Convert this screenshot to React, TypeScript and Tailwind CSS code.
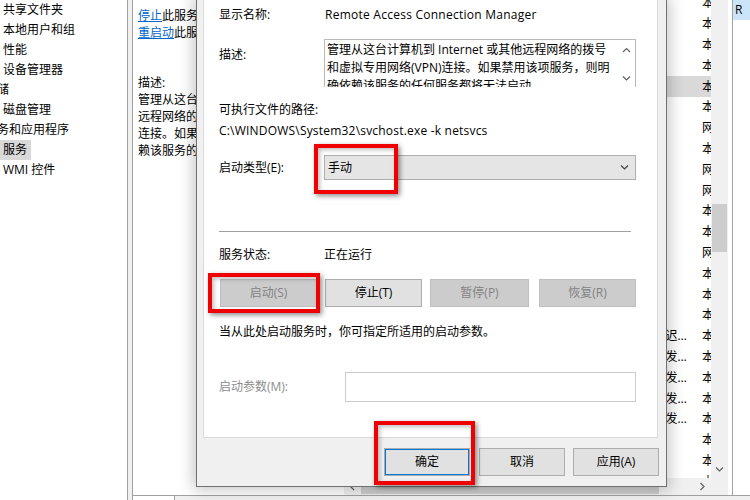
import clsx from 'clsx'
import type { ReactNode } from 'react'

// 服务管理器背景 + “属性”对话框（常规页）

type Dir = 'up' | 'down' | 'left' | 'right'

const Chevron = ({ dir, className }: { dir: Dir; className?: string }) => {
  const vertical = dir === 'up' || dir === 'down'
  const pts = {
    up: '1,5 4.5,1.5 8,5',
    down: '1,1.5 4.5,5 8,1.5',
    left: '5,1 1.5,4.5 5,8',
    right: '1.5,1 5,4.5 1.5,8',
  }[dir]
  return (
    <svg
      width={vertical ? 9 : 7}
      height={vertical ? 7 : 9}
      viewBox={vertical ? '0 0 9 7' : '0 0 7 9'}
      className={className}
    >
      <polyline points={pts} fill="none" stroke="currentColor" strokeWidth="1.2" />
    </svg>
  )
}

const tree = [
  { t: '共享文件夹', child: true },
  { t: '本地用户和组', child: true },
  { t: '性能', child: true },
  { t: '设备管理器', child: true },
  { t: '存储', child: false },
  { t: '磁盘管理', child: true },
  { t: '服务和应用程序', child: false },
  { t: '服务', child: true, sel: true },
  { t: 'WMI 控件', child: true },
]

const Tree = () => (
  <div className="h-full w-[128px] shrink-0 overflow-hidden border-r border-[#a0a0a0] bg-white">
    {tree.map((n) => (
      <div key={n.t} className={clsx('h-[20px] whitespace-nowrap leading-[20px]', !n.child && 'ml-[-18px]')}>
        <span className={clsx('inline-block px-[3px] pr-[4px]', n.sel && 'bg-[#d9d9d9]')}>{n.t}</span>
      </div>
    ))}
  </div>
)

const MiddlePane = () => (
  <div className="h-full w-[211px] shrink-0 overflow-hidden bg-white pl-[5px] pt-[7px] leading-[17px] whitespace-nowrap">
    <div>
      <span className="text-[#0066cc] underline">停止</span>此服务
    </div>
    <div>
      <span className="text-[#0066cc] underline">重启动</span>此服务
    </div>
    <div className="mt-[33px]">描述:</div>
    <div>管理从这台计算机到 Internet 或其他</div>
    <div>远程网络的拨号和虚拟专用网络(VPN)</div>
    <div>连接。如果禁用该项服务，则明确依</div>
    <div>赖该服务的任何服务都将无法启动。</div>
  </div>
)

const logonNet = [6, 8, 9, 12]
const startup: Record<number, string> = {
  16: '自动(延迟启动)',
  17: '手动(触发器启动)',
  18: '手动(触发器启动)',
  19: '手动(触发器启动)',
  20: '手动(触发器启动)',
}

const ServiceList = () => (
  <div className="flex h-full w-[384px] shrink-0 flex-col">
    <div className="flex min-h-0 flex-1">
      <div className="w-[367px] overflow-hidden bg-white">
        <div className="mt-[-7px]">
          {Array.from({ length: 24 }, (_, i) => (
            <div
              key={i}
              className={clsx('flex h-[20.8px] items-center whitespace-nowrap', i === 4 && 'bg-[#d9d9d9]')}
            >
              <div className="w-[282px] shrink-0" />
              <div className="w-[64px] shrink-0 truncate">{startup[i] ?? '手动'}</div>
              <div className="w-[12px] shrink-0" />
              <div className="w-[9px] shrink-0 overflow-hidden">{logonNet.includes(i) ? '网络服务' : '本地系统'}</div>
            </div>
          ))}
        </div>
      </div>
      <div className="relative w-[17px] shrink-0 bg-[#f0f0f0]">
        <div className="absolute left-[1px] top-[204px] h-[48px] w-[15px] bg-[#cdcdcd]" />
        <div className="absolute bottom-0 flex h-[17px] w-full items-center justify-center text-[#606060]">
          <Chevron dir="down" />
        </div>
      </div>
    </div>
    <div className="flex h-[17px] shrink-0 bg-[#f0f0f0]">
      <div className="flex w-[17px] items-center justify-center text-[#606060]">
        <Chevron dir="left" />
      </div>
      <div className="my-[1px] w-[298px] bg-[#cdcdcd]" />
      <div className="flex-1" />
      <div className="flex w-[17px] items-center justify-center text-[#606060]">
        <Chevron dir="right" />
      </div>
      <div className="w-[17px]" />
    </div>
  </div>
)

const WinButton = ({
  children,
  className,
  disabled,
  focused,
}: {
  children: ReactNode
  className: string
  disabled?: boolean
  focused?: boolean
}) => (
  <div
    className={clsx(
      'flex h-[28px] shrink-0 items-center justify-center border',
      disabled ? 'border-[#bfbfbf] bg-[#cccccc] text-[#838383]' : 'border-[#adadad] bg-[#e1e1e1] text-black',
      focused && 'border-[#0078d7] shadow-[inset_0_0_0_1px_#0078d7]',
      className,
    )}
  >
    {children}
  </div>
)

const Dialog = () => (
  <div className="absolute left-[196px] top-0 h-[487px] w-[471px] border-x border-b border-[#707070] bg-[#f0f0f0] shadow-[0_0_14px_3px_rgba(0,0,0,0.22)]">
    <div className="ml-[6px] h-[438px] w-[455px] border-x border-b border-[#d9d9d9] bg-white pl-[15px] pr-[20px] leading-[16px]">
      <div className="flex pt-[7px]">
        <div className="w-[106px] shrink-0">显示名称:</div>
        <div className="tracking-[0.25px]">Remote Access Connection Manager</div>
      </div>

      <div className="mt-[16px] flex">
        <div className="w-[105px] shrink-0 pt-[8px]">描述:</div>
        <div className="flex h-[48px] w-[312px] overflow-hidden border-x border-t border-[#b9b9b9]">
          <div className="flex-1 overflow-hidden whitespace-nowrap pl-[2px] pt-[1px] leading-[18px]">
            <div>管理从这台计算机到 Internet 或其他远程网络的拨号</div>
            <div>和虚拟专用网络(VPN)连接。如果禁用该项服务，则明</div>
            <div className="h-[11px] overflow-hidden">确依赖该服务的任何服务都将无法启动。</div>
          </div>
          <div className="flex w-[17px] shrink-0 flex-col items-center pt-[7px] text-[#606060]">
            <Chevron dir="up" />
            <Chevron dir="down" className="mt-[21px]" />
          </div>
        </div>
      </div>

      <div className="mt-[15px]">可执行文件的路径:</div>
      <div className="mt-[5px] tracking-[0.2px]">C:\WINDOWS\System32\svchost.exe -k netsvcs</div>

      <div className="mt-[16px] flex items-center">
        <div className="w-[105px] shrink-0">启动类型(E):</div>
        <div className="flex h-[25px] w-[312px] items-center justify-between border border-[#adadad] bg-[#e5e5e5] pl-[3px] pr-[6px]">
          <span>手动</span>
          <Chevron dir="down" className="text-[#404040]" />
        </div>
      </div>

      <div className="mt-[51px] h-px w-[412px] bg-[#a0a0a0]" />

      <div className="mt-[15px] flex">
        <div className="w-[105px] shrink-0">服务状态:</div>
        <div>正在运行</div>
      </div>

      <div className="mt-[16px] flex pl-[1px]">
        <WinButton className="w-[97px]" disabled>
          启动(S)
        </WinButton>
        <WinButton className="ml-[8px] w-[97px]">停止(T)</WinButton>
        <WinButton className="ml-[8px] w-[99px]" disabled>
          暂停(P)
        </WinButton>
        <WinButton className="ml-[10px] w-[97px]" disabled>
          恢复(R)
        </WinButton>
      </div>

      <div className="mt-[17px]">当从此处启动服务时，你可指定所适用的启动参数。</div>

      <div className="mt-[32px] flex items-center">
        <div className="w-[126px] shrink-0 text-[#8c8c8c]">启动参数(M):</div>
        <div className="h-[30px] w-[291px] border border-[#cccccc] bg-white" />
      </div>
    </div>

    <div className="mt-[10px] flex justify-end pr-[7px]">
      <WinButton className="w-[86px]" focused>
        确定
      </WinButton>
      <WinButton className="ml-[9px] w-[86px]">取消</WinButton>
      <WinButton className="ml-[8px] w-[86px]">应用(A)</WinButton>
    </div>
  </div>
)

const redBox =
  'pointer-events-none absolute border-[4px] border-[#f00000] shadow-[2px_2px_5px_rgba(0,0,0,0.45),inset_2px_2px_4px_rgba(0,0,0,0.25)]'

export default function App() {
  return (
    <div className="relative h-[500px] w-[750px] overflow-hidden bg-white font-['Open_Sans','Noto_Sans_CJK_SC',sans-serif] text-[12px] text-black">
      <div className="flex h-full">
        <Tree />
        <div className="h-full w-[5px] shrink-0 border-r border-[#a0a0a0] bg-[#f0f0f0]" />
        <div className="flex min-w-0 flex-1 flex-col">
          <div className="flex h-[495px] shrink-0">
            <MiddlePane />
            <ServiceList />
            <div className="w-[4px] shrink-0 bg-white" />
            <div className="flex-1 border-l border-[#a0a0a0] bg-white">
              <div className="h-[20px] bg-[#cce4f7] pl-[2px] leading-[20px]">R</div>
            </div>
          </div>
          <div className="flex flex-1 border-t border-[#a0a0a0] bg-[#f0f0f0]">
            <div className="w-[42px] border-r border-[#a0a0a0] bg-white" />
          </div>
        </div>
      </div>

      <Dialog />

      <div className={clsx(redBox, 'left-[314px] top-[144px] h-[50px] w-[84px]')} />
      <div className={clsx(redBox, 'left-[208px] top-[273px] h-[40px] w-[112px]')} />
      <div className={clsx(redBox, 'left-[374px] top-[421px] h-[64px] w-[101px]')} />
    </div>
  )
}
